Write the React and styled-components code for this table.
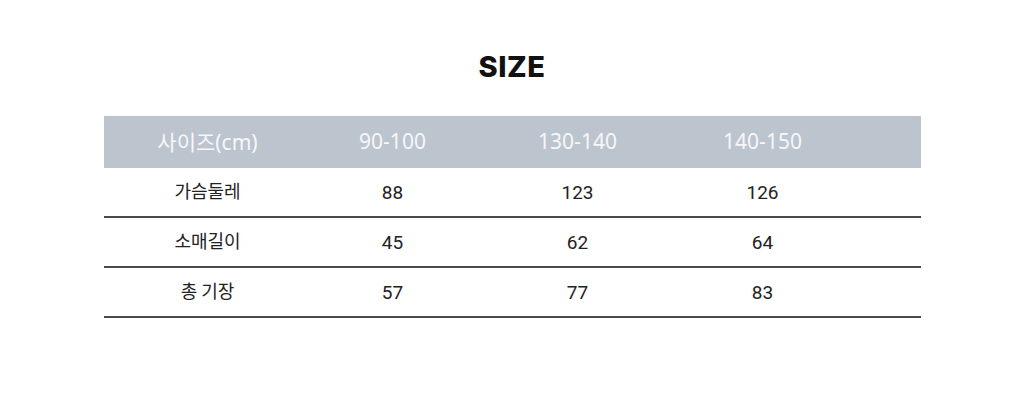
import React from "react";
import styled, { createGlobalStyle } from "styled-components";

const GlobalStyle = createGlobalStyle`
  html, body {
    margin: 0;
    padding: 0;
    background: #ffffff;
  }
  body {
    font-family: "Noto Sans", "Noto Sans CJK KR", sans-serif;
  }
`;

const rows = [
  { label: "가슴둘레", values: ["88", "123", "126"] },
  { label: "소매길이", values: ["45", "62", "64"] },
  { label: "총 기장", values: ["57", "77", "83"] },
];

const App = () => {
  return (
    <>
      <GlobalStyle />
      <Page>
        <Title>SIZE</Title>
        <Table>
          <HeadRow>
            <HeadCell>사이즈(cm)</HeadCell>
            <HeadCell>90-100</HeadCell>
            <HeadCell>130-140</HeadCell>
            <HeadCell>140-150</HeadCell>
            <HeadCell />
          </HeadRow>
          {rows.map((row) => (
            <BodyRow key={row.label}>
              <LabelCell>{row.label}</LabelCell>
              {row.values.map((v, i) => (
                <NumCell key={i}>{v}</NumCell>
              ))}
              <NumCell />
            </BodyRow>
          ))}
        </Table>
      </Page>
    </>
  );
};

export default App;

const Page = styled.div`
  width: 1024px;
  height: 408px;
  display: flex;
  flex-direction: column;
  align-items: center;
  padding-top: 47px;
  box-sizing: border-box;
`;

const Title = styled.h1`
  margin: 0 0 29px;
  font-family: Inter, "Noto Sans", sans-serif;
  font-weight: 800;
  font-size: 29px;
  line-height: 40px;
  letter-spacing: 0.5px;
  color: #111111;
`;

const Table = styled.div`
  width: 817px;
  margin-left: 1px;
  display: flex;
  flex-direction: column;
`;

const Row = styled.div`
  display: grid;
  grid-template-columns: repeat(4, 185px) 1fr;
  padding-left: 11px;
  align-items: center;
`;

const HeadRow = styled(Row)`
  height: 52px;
  background: #bcc4ce;
`;

const BodyRow = styled(Row)`
  height: 48px;
  border-bottom: 2px solid #4a4a4a;
`;

const HeadCell = styled.div`
  text-align: center;
  font-family: "Noto Sans", "Noto Sans CJK KR", sans-serif;
  font-size: 21px;
  color: #f6f7f9;
  margin-top: -2px;
`;

const LabelCell = styled.div`
  text-align: center;
  font-family: "Noto Sans CJK KR", sans-serif;
  font-size: 18px;
  color: #222222;
  margin-top: -4px;
`;

const NumCell = styled.div`
  text-align: center;
  font-family: Roboto, sans-serif;
  font-size: 19px;
  color: #222222;
`;
